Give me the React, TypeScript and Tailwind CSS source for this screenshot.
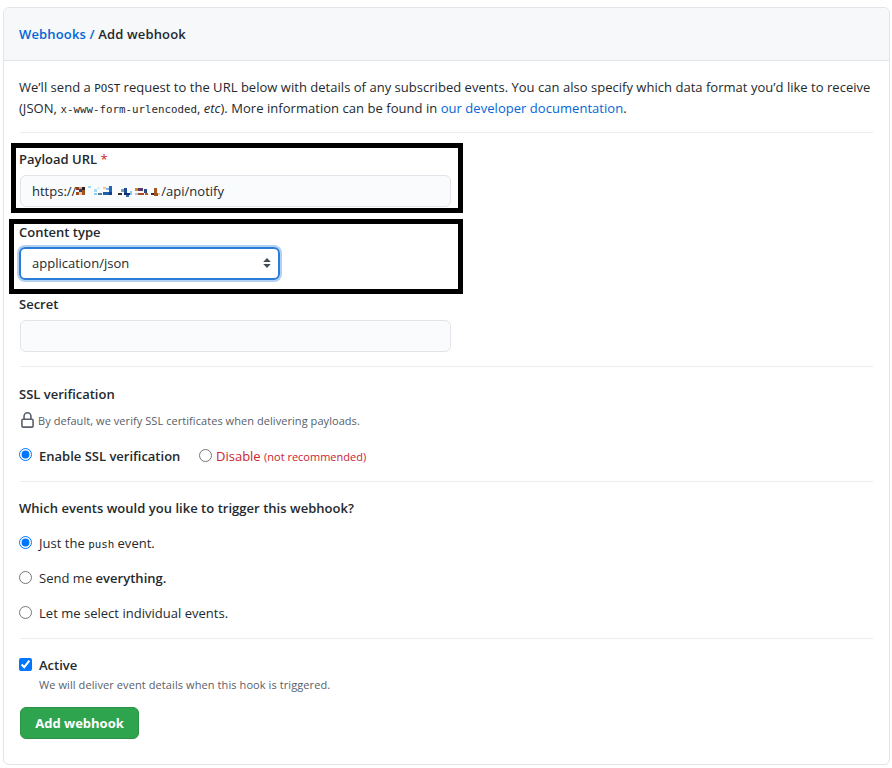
import type { ReactNode } from 'react';

interface ChoiceProps {
  name: string;
  checked?: boolean;
  children: ReactNode;
}

function Radio({ name, checked }: { name: string; checked?: boolean }) {
  return (
    <input
      type="radio"
      name={name}
      defaultChecked={checked}
      className="m-0 block h-[13px] w-[13px] shrink-0 accent-[#0075ff]"
    />
  );
}

function Code({ children }: { children: ReactNode }) {
  return <code className="font-['DejaVu_Sans_Mono',monospace] text-[10.8px] leading-none tracking-normal">{children}</code>;
}

function EventChoice({ name, checked, children }: ChoiceProps) {
  return (
    <label className="flex h-5 items-center gap-[7px]">
      <Radio name={name} checked={checked} />
      <span className="mt-0.5 tracking-[0.02px]">{children}</span>
    </label>
  );
}

// Blocks that cover the host part of the payload url: x, y, width, height, fill
const maskBlocks: [number, number, number, number, string][] = [
  [0, 2, 3, 3, '#8a3c22'],
  [3, 2, 3, 3, '#d9a27c'],
  [6, 2, 3, 3, '#301c24'],
  [3, 4, 3, 3, '#3a3f66'],
  [6, 5, 3, 2, '#a5531c'],
  [0, 7, 3, 3, '#9a4a20'],
  [3, 7, 3, 3, '#e8c7ae'],
  [6, 7, 3, 3, '#a5531c'],
  [12, 1, 3, 2, '#9bdcf8'],
  [18, 4, 3, 3, '#a8dcf5'],
  [21, 2, 3, 2, '#d8f0fb'],
  [18, 8, 3, 2, '#8fcdee'],
  [22, 8, 4, 2, '#4f7fa0'],
  [27, 2, 3, 2, '#f4c489'],
  [27, 7, 6, 3, '#1d5fb0'],
  [33, 1, 3, 6, '#1f66bb'],
  [33, 7, 3, 3, '#123f86'],
  [30, 3, 3, 2, '#80b7e8'],
  [42, 8, 4, 2, '#333333'],
  [45, 4, 3, 3, '#8e9aa8'],
  [48, 3, 3, 5, '#1b4e96'],
  [48, 8, 6, 2, '#162d6b'],
  [50, 10, 3, 2, '#2d6dbb'],
  [54, 6, 2, 4, '#8cc5ee'],
  [59, 3, 3, 3, '#d9822b'],
  [62, 3, 5, 3, '#5b3a6a'],
  [59, 8, 3, 2, '#9bd3ef'],
  [62, 8, 6, 2, '#a54b25'],
  [68, 4, 3, 4, '#2d4a8a'],
  [69, 8, 3, 2, '#c9561c'],
  [78, 3, 3, 5, '#a55a24'],
  [75, 8, 3, 2, '#402a35'],
  [78, 8, 4, 3, '#a5531c'],
  [82, 8, 2, 2, '#f0c79c'],
];

function HostMask() {
  return (
    <svg width="85" height="12" viewBox="0 0 85 12" className="shrink-0" shapeRendering="crispEdges">
      {maskBlocks.map(([x, y, w, h, fill], i) => (
        <rect key={i} x={x} y={y} width={w} height={h} fill={fill} />
      ))}
    </svg>
  );
}

export default function App() {
  return (
    <div className="h-[768px] w-[892px] overflow-hidden bg-white pl-[3px] pt-[7px] font-['Open_Sans','Noto_Sans',sans-serif] text-[13px] leading-5 text-[#24292e]">
      <div className="relative h-[758px] w-[887px] rounded-md border border-[#e1e4e8]">

        {/* HEADER */}
        <div className="flex h-[53px] items-center rounded-t-md border-b border-[#e1e4e8] bg-[#f6f8fa] px-[15px] font-semibold tracking-[0.15px]">
          <h2 className="whitespace-pre"><span className="text-[#0366d6]">Webhooks / </span>Add webhook</h2>
        </div>

        <form className="px-4">
          <div className="h-[72px] whitespace-nowrap border-b border-[#eaecef] pt-4 leading-[21px] tracking-[0.025px]">
            <p className="-ml-px h-[21px]">
              We’ll send a <Code>POST</Code> request to the URL below with details of any subscribed events. You can also specify which data format you’d like to receive
            </p>
            <p className="-ml-px h-[21px] tracking-[0.04px]">
              (JSON, <Code>x-www-form-urlencoded</Code>, <em>etc</em>). More information can be found in{' '}
              <span className="text-[#0366d6]">our developer documentation</span>.
            </p>
          </div>

          {/* FIELDS */}
          <div className="pt-4">
            <label className="-ml-px block h-[26px] font-semibold">Payload URL <span className="font-normal text-[#cb2431]">*</span></label>
            <div className="flex h-8 w-[431px] items-center rounded-md border border-[#e1e4e8] bg-[#fafbfc] pb-px pl-[11px]">
              <span>https://</span>
              <HostMask />
              <span>/api/notify</span>
            </div>
          </div>
          <div className="pt-[15px]">
            <label className="-ml-px block h-[25px] font-semibold">Content type</label>
            <div className="-ml-px flex h-[33px] w-[261px] items-center justify-between rounded-md border-2 border-[#2b7cd8] pb-px pl-[11px] pr-[7px] shadow-[0_0_0_2px_#b3d1f3]">
              <span className="tracking-[0.03px]">application/json</span>
              <svg width="8" height="10" viewBox="0 0 8 10" fill="#444d56">
                <path d="M4 0 7.8 4H.2zM4 10 .2 6h7.6z" />
              </svg>
            </div>
          </div>
          <div className="h-[72px] pt-3.5">
            <label className="-ml-px block h-[26px] font-semibold">Secret</label>
            <div className="h-8 w-[431px] rounded-md border border-[#e1e4e8] bg-[#fafbfc]" />
          </div>

          <div className="mt-3.5 h-[115px] border-t border-[#eaecef] pt-[17px]">
            <h3 className="-ml-px font-semibold">SSL verification</h3>
            <p className="-ml-px mt-[7px] flex items-center text-[11px] tracking-[0.06px] text-[#586069]">
              <svg width="17" height="17" viewBox="0 0 16 16" fill="currentColor" className="-mt-px mr-0.5">
                <path fillRule="evenodd" d="M4 4v2h-.25A1.75 1.75 0 002 7.75v5.5c0 .966.784 1.75 1.75 1.75h8.5A1.75 1.75 0 0014 13.25v-5.5A1.75 1.75 0 0012.25 6H12V4a4 4 0 10-8 0zm6.5 2V4a2.5 2.5 0 10-5 0v2h5zM12 7.5h.25a.25.25 0 01.25.25v5.5a.25.25 0 01-.25.25h-8.5a.25.25 0 01-.25-.25v-5.5a.25.25 0 01.25-.25H12z" />
              </svg>
              <span>By default, we verify SSL certificates when delivering payloads.</span>
            </p>
            <div className="-ml-px mt-[15px] flex h-5 items-center">
              <span className="-mt-[3px]"><Radio name="ssl" checked /></span>
              <span className="ml-[7px] w-[160px] font-semibold">Enable SSL verification</span>
              <span className="-mt-px"><Radio name="ssl" /></span>
              <span className="ml-1 whitespace-nowrap text-[#cb2431]">Disable <span className="text-[11px]">(not recommended)</span></span>
            </div>
          </div>

          {/* EVENTS */}
          <div className="h-[157px] border-t border-[#eaecef] pt-4">
            <h3 className="-ml-px font-semibold tracking-[0.03px]">Which events would you like to trigger this webhook?</h3>
            <div className="-ml-px mt-3.5 flex flex-col gap-[15px]">
              <EventChoice name="events" checked>Just the <Code>push</Code> event.</EventChoice>
              <EventChoice name="events">Send me <strong className="font-semibold">everything.</strong></EventChoice>
              <EventChoice name="events">Let me select individual events.</EventChoice>
            </div>
          </div>

          <div className="border-t border-[#eaecef] pt-4">
            <label className="-ml-px flex h-5 items-center gap-[7px]">
              <input type="checkbox" defaultChecked className="mb-0.5 h-[13px] w-[13px] accent-[#0075ff]" />
              <span className="font-semibold">Active</span>
            </label>
            <p className="pl-[19px] text-[11px] tracking-[0.09px] text-[#586069]">We will deliver event details when this hook is triggered.</p>
            <button type="button" className="mt-3 h-8 w-[119px] rounded-md border border-[#2a9147] bg-[#2ea44f] font-bold text-white">
              Add webhook
            </button>
          </div>
        </form>

        {/* Highlight frames over the two required fields */}
        <div className="pointer-events-none absolute left-[7px] top-[135px] h-[70px] w-[452px] border-[5px] border-black" />
        <div className="pointer-events-none absolute left-[5px] top-[211px] h-[75px] w-[454px] border-[5px] border-black" />
      </div>
    </div>
  );
}
